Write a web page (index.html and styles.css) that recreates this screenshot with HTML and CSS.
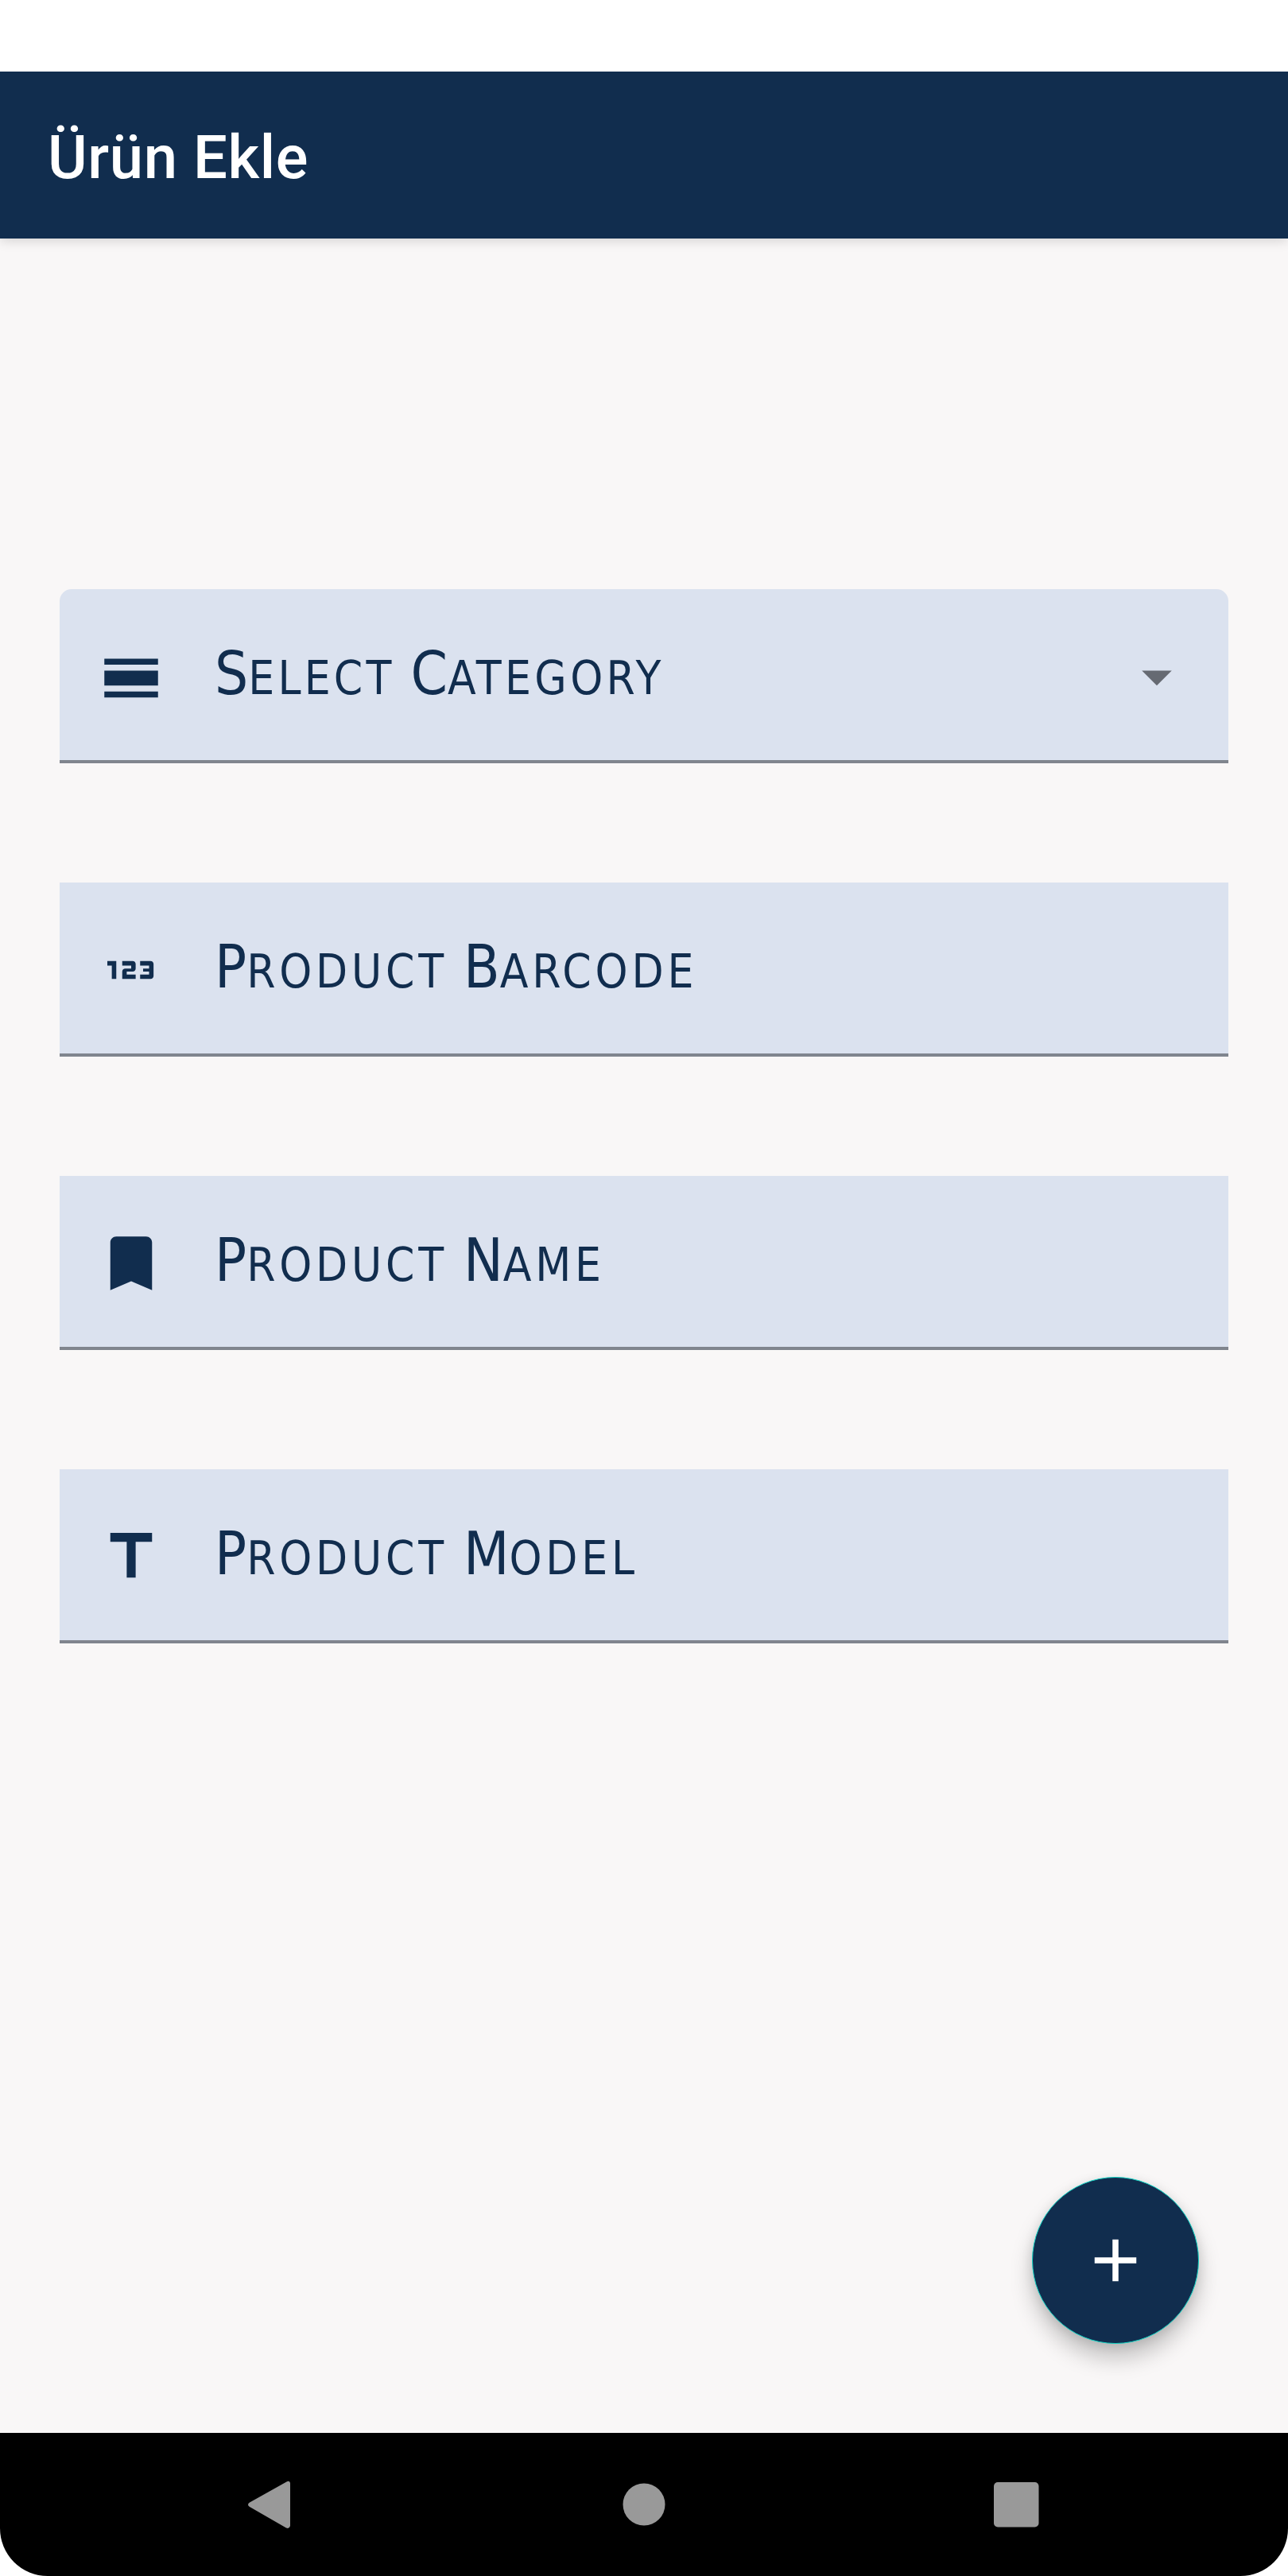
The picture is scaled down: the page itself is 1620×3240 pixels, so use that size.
FILE: index.html
```html
<!DOCTYPE html>
<html lang="tr">
<head>
<meta charset="utf-8">
<title>Ürün Ekle</title>
<link rel="stylesheet" href="styles.css">
</head>
<body>
<div class="screen">
  <header class="app-bar"><h1 class="title">Ürün Ekle</h1></header>
  <main class="content">
    <div class="field field-select">
      <svg class="icon" viewBox="0 0 24 24"><path d="M3 6h18v2H3zM3 10h18v5H3zM3 17h18v2H3z"/></svg>
      <span class="label"><span class="word select">Select</span> <span class="word category">Category</span></span>
      <svg class="icon arrow" viewBox="0 0 24 24"><path d="M7 10l5 5 5-5z"/></svg>
    </div>
    <div class="field">
      <svg class="icon" viewBox="0 0 24 24"><path d="M7 15H5.5v-4.5H4V9h3zM13.5 13.5h-3v-1h2c.55 0 1-.45 1-1V10c0-.55-.45-1-1-1H9v1.5h3v1h-2c-.55 0-1 .45-1 1V15h4.5zM19.5 14v-4c0-.55-.45-1-1-1H15v1.5h3v1h-2v1h2v1h-3V15h3.5c.55 0 1-.45 1-1z"/></svg>
      <span class="label"><span class="word">Product</span> <span class="word">Barcode</span></span>
    </div>
    <div class="field">
      <svg class="icon" viewBox="0 0 24 24"><path d="M17 3H7c-1.100 0-2 .9-2 2v16l7-3 7 3V5c0-1.100-.9-2-2-2z"/></svg>
      <span class="label"><span class="word">Product</span> <span class="word">Name</span></span>
    </div>
    <div class="field">
      <svg class="icon" viewBox="0 0 24 24"><path d="M5 4v3h5.500v12h3V7H19V4z"/></svg>
      <span class="label"><span class="word">Product</span> <span class="word">Model</span></span>
    </div>
    <button class="fab" aria-label="Ekle"><svg class="icon" viewBox="0 0 24 24"><path d="M19 13h-6v6h-2v-6H5v-2h6V5h2v6h6z"/></svg></button>
  </main>
  <nav class="nav-bar">
    <svg class="nav-icon" viewBox="0 0 60 60"><path d="M51 1.800Q55 -1 56 3V57Q55 61 51 59.500L5 33Q1 30 5 27.500Z"/></svg>
    <svg class="nav-icon" viewBox="0 0 60 60"><circle cx="31" cy="30" r="26.500"/></svg>
    <svg class="nav-icon" viewBox="0 0 60 60"><rect x="2" y="2" width="56.500" height="56.500" rx="5"/></svg>
  </nav>
</div>
</body>
</html>
```
FILE: styles.css
```css
* { box-sizing: border-box; }
body { margin: 0; background: #fff; }
.screen {
  display: flex;
  flex-direction: column;
  width: 1620px;
  height: 3240px;
  padding-top: 90px;
  font-family: Roboto, sans-serif;
}
.app-bar {
  display: flex;
  align-items: center;
  height: 210px;
  padding: 5px 60px 0;
  background: #112d4e;
  box-shadow: 0 3px 14px rgba(0, 0, 0, .15);
  clip-path: inset(0 0 -30px);
  z-index: 1;
}
.title {
  margin: 0;
  color: #fff;
  font-size: 76px;
  font-weight: 500;
  line-height: 88px;
  letter-spacing: .6px;
}
.content {
  display: flex;
  flex-direction: column;
  flex: 1;
  gap: 150px;
  padding: 441px 75px 0;
  background: #f9f7f7;
}
.field {
  display: flex;
  align-items: center;
  height: 219px;
  padding: 0 45px;
  background: #dbe2ef;
  box-shadow: inset 0 -4px #80858e;
  color: #112d4e;
}
.field-select { border-radius: 15px 15px 0 0; }
.icon { width: 90px; height: 90px; flex: none; fill: currentColor; }
.arrow { margin-left: auto; color: #666a72; }
.label {
  display: flex;
  align-items: baseline;
  margin: 0 0 1px 60px;
  font-family: "DejaVu Sans Condensed", "DejaVu Sans", sans-serif;
  font-size: 58px;
  font-stretch: 75%;
  line-height: 90px;
  white-space: pre;
}
.word { display: block; text-transform: uppercase; letter-spacing: 4.8px; }
.word::first-letter { font-size: 74px; line-height: 90px; letter-spacing: 0; }
.word + .word { margin-left: 20px; }
.select { letter-spacing: 4.2px; }
.category { letter-spacing: 4.4px; }
.fab {
  display: flex;
  align-items: center;
  justify-content: center;
  align-self: flex-end;
  width: 210px;
  height: 210px;
  margin: 521px 37px 0 0;
  padding: 0;
  border: 1.500px solid #10d5c5;
  border-radius: 50%;
  background: #112d4e;
  color: #fff;
  box-shadow: 0 18px 28px rgba(0, 0, 0, .22), 0 3px 14px rgba(0, 0, 0, .1);
}
.nav-bar {
  display: flex;
  align-items: center;
  justify-content: space-between;
  height: 180px;
  padding: 0 312px 0 309px;
  background: #000;
  border-radius: 0 0 60px 60px;
}
.nav-icon { width: 60px; height: 60px; fill: #999; }
```
